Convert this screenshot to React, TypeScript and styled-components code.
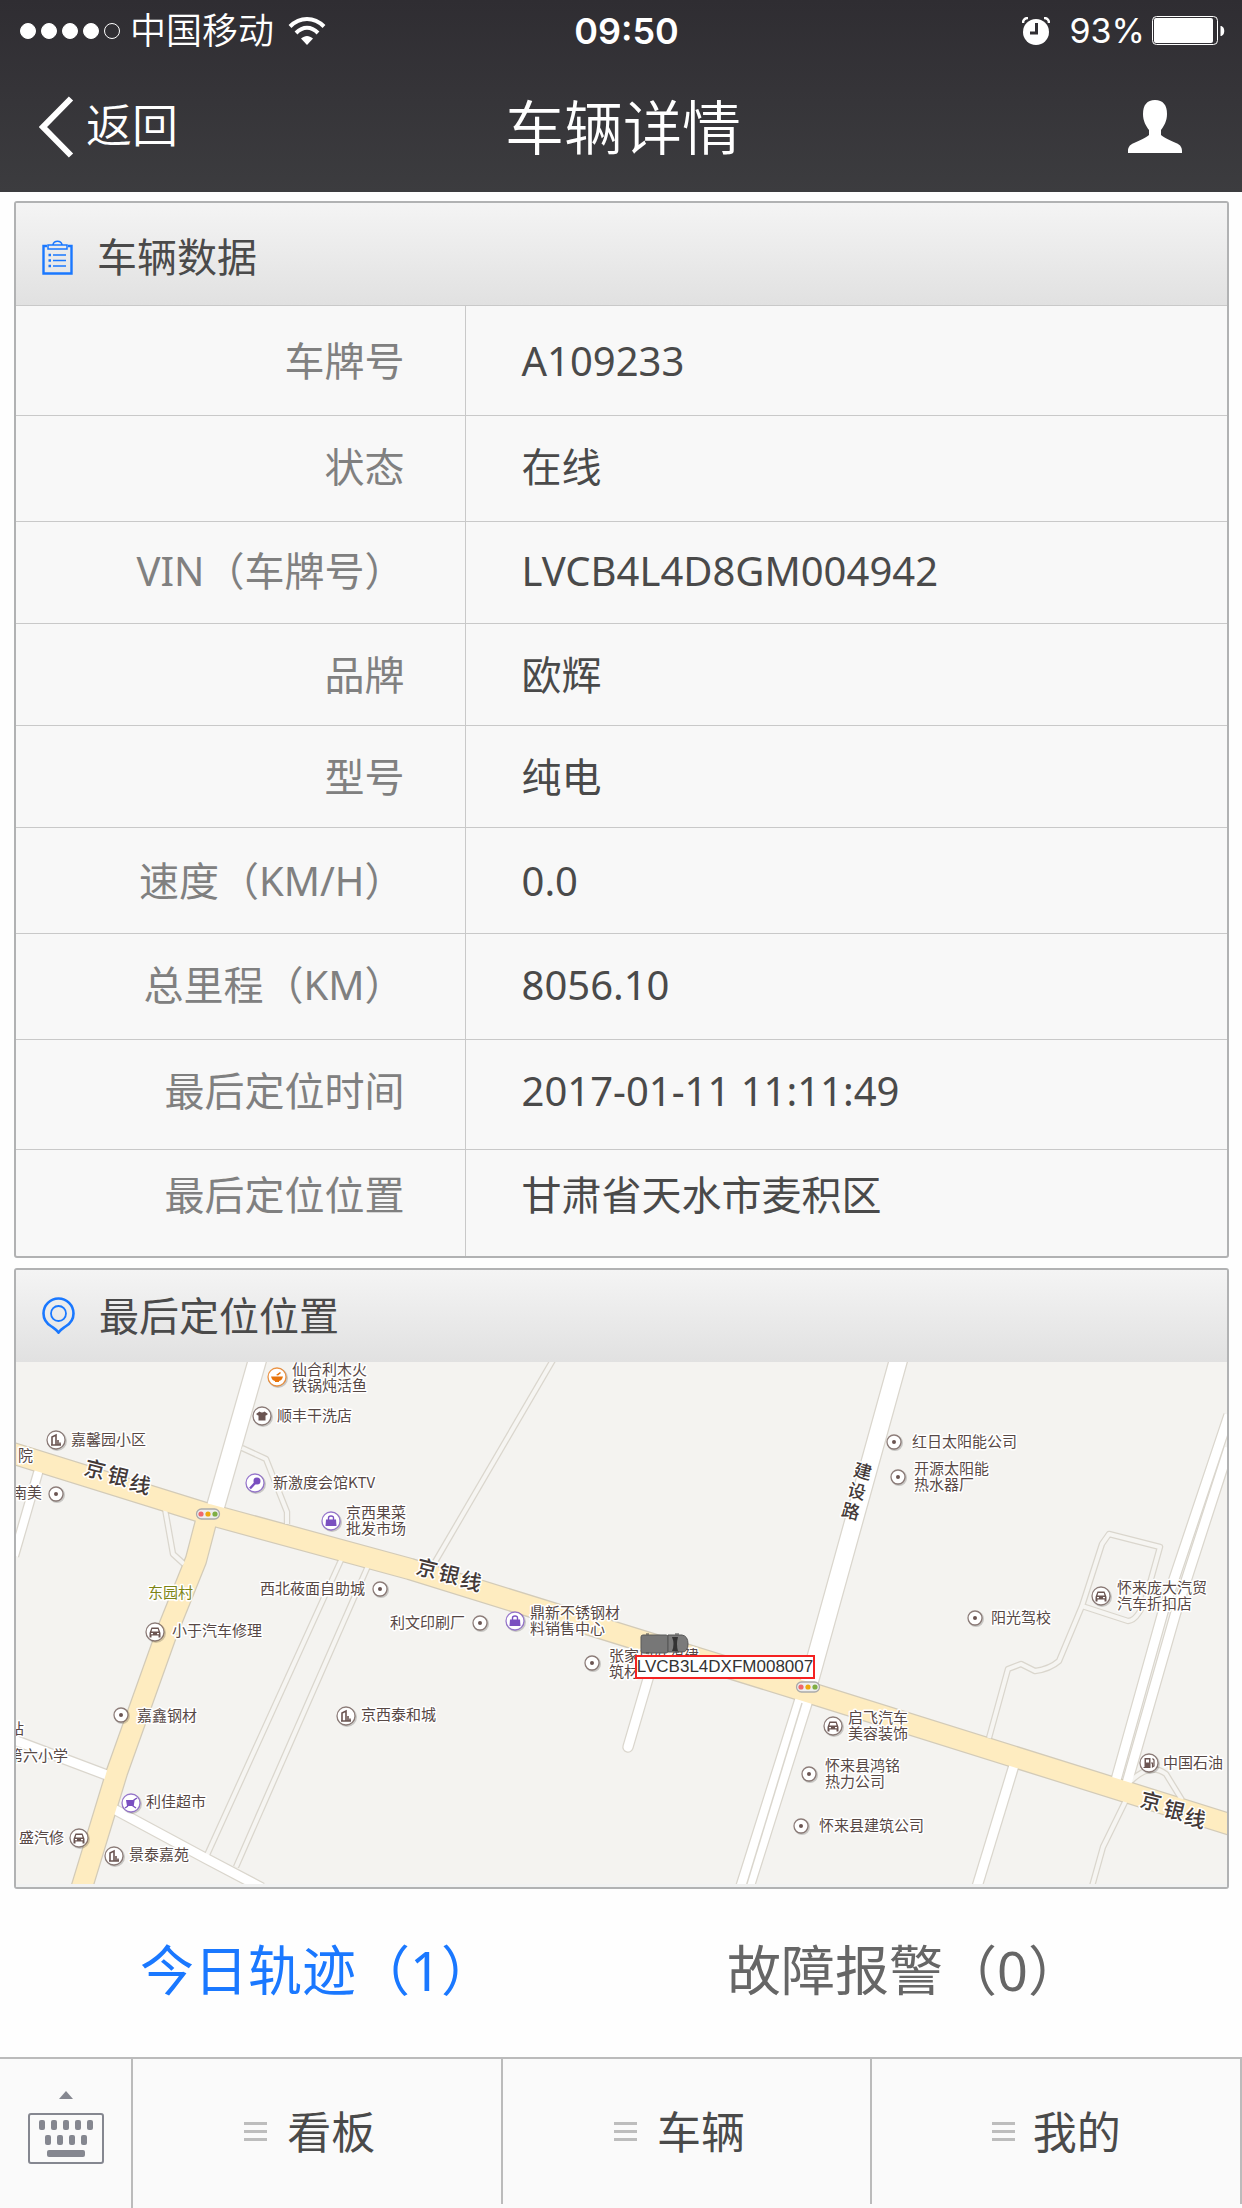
import React from "react";
import styled, { createGlobalStyle } from "styled-components";

const sans = `"Noto Sans", "Noto Sans CJK SC", sans-serif`;

const GlobalStyle = createGlobalStyle`
  * { box-sizing: border-box; }
  body { margin: 0; background: #fefefe; color: #4a4a4a; font-family: ${sans}; }
  button { border: 0; padding: 0; background: none; font: inherit; color: inherit; cursor: pointer; }
  h1, h2 { margin: 0; font-weight: 400; }
  svg { display: block; }
`;

const Page = styled.div`
  display: flex;
  flex-direction: column;
  min-height: 100vh;
`;

/* ---------- header ---------- */

const Header = styled.header`
  height: 192px;
  background: linear-gradient(#2f2d32, #3c3c3f);
  color: #fff;
`;

const StatusBar = styled.div`
  display: grid;
  grid-template-columns: 1fr auto 1fr;
  align-items: center;
  height: 62px;
  padding: 0 17px 0 20px;
  font: 36px/44px Inter, "Noto Sans CJK SC", sans-serif;
`;

const StatusSide = styled.div<{ $end?: boolean }>`
  display: flex;
  align-items: center;
  justify-content: ${(p) => (p.$end ? "flex-end" : "flex-start")};
  font-size: ${(p) => (p.$end ? 34 : 36)}px;
`;

const Signal = styled.div`
  display: flex;
  gap: 5px;
  margin-right: 10px;
`;

const SignalDot = styled.i<{ $off?: boolean }>`
  width: 16px;
  height: 16px;
  border: 1px solid #fff;
  border-radius: 50%;
  background: ${(p) => (p.$off ? "transparent" : "#fff")};
`;

const Carrier = styled.span`
  margin-right: 14px;
  font-weight: 350;
`;

const Clock = styled.time`
  padding-left: 8px;
  font-weight: 600;
`;

const Percent = styled.span`
  margin: 0 7px 0 20px;
`;

const NavBar = styled.div`
  display: grid;
  grid-template-columns: 1fr auto 1fr;
  align-items: center;
  height: 130px;
  padding: 0 39px;
`;

const BackButton = styled.button`
  display: flex;
  align-items: center;
  gap: 12px;
  justify-self: start;
  font-size: 46px;
  font-weight: 350;
`;

const BackText = styled.span`
  padding-bottom: 6px;
  line-height: 60px;
`;

const PageTitle = styled.h1`
  padding-left: 4px;
  font-size: 59px;
  font-weight: 350;
  line-height: 80px;
`;

const ProfileButton = styled.button`
  justify-self: end;
  margin-right: 20px;
`;

/* ---------- cards ---------- */

const Cards = styled.main`
  display: flex;
  flex-direction: column;
  gap: 10px;
  padding: 9px 13px 0 14px;
`;

const Card = styled.section`
  overflow: hidden;
  border: 2px solid #b1b2b3;
  border-radius: 3px;
  background: #f8f8f8;
`;

const CardHeader = styled.header<{ $tall?: boolean }>`
  display: flex;
  align-items: center;
  gap: 24px;
  height: ${(p) => (p.$tall ? 102 : 92)}px;
  padding: ${(p) => (p.$tall ? 6 : 0)}px 26px 0;
  background: linear-gradient(#f4f4f4, #e1e1e1);
`;

const CardTitle = styled.h2`
  font-size: 40px;
  line-height: 60px;
`;

const DataTable = styled.table`
  width: 100%;
  border-collapse: collapse;
  font-size: 40px;
  line-height: 60px;
`;

const DataRow = styled.tr<{ $height: number; $below: number }>`
  height: ${(p) => p.$height}px;
  border-top: 1px solid #c9c9c9;

  & > * {
    padding-top: 0;
    padding-bottom: ${(p) => p.$below}px;
  }
`;

const Label = styled.th`
  width: 449px;
  padding-right: 60px;
  border-right: 1px solid #c9c9c9;
  color: #808080;
  font-weight: 400;
  text-align: right;
`;

const Value = styled.td`
  padding-left: 56px;
  color: #4a4a4a;
`;

/* ---------- map ---------- */

const MapFrame = styled.div`
  position: relative;
  overflow: hidden;
  border-bottom: 3px solid #f1f2f2;
  background: #f4f3f0;
`;

const MapSvg = styled.svg`
  width: 100%;
  height: auto;

  text {
    font-family: "Noto Sans CJK SC", sans-serif;
    paint-order: stroke;
    stroke: #fff;
    stroke-width: 3px;
    stroke-linejoin: round;
  }
`;

const PlateTag = styled.span`
  position: absolute;
  left: 51.1%;
  top: 56.3%;
  border: 2px solid #f52222;
  background: #fff;
  color: #333;
  font: 17px/20px "Liberation Sans", sans-serif;
`;

/* ---------- summary links and bottom bar ---------- */

const Summary = styled.nav`
  display: grid;
  grid-template-columns: 1fr 1fr;
  align-items: center;
  flex: 1;
  padding: 0 44px 6px 24px;
`;

const SummaryLink = styled.a<{ $active?: boolean }>`
  color: ${(p) => (p.$active ? "#1a78ff" : "#666")};
  font-size: 54px;
  line-height: 80px;
  text-align: center;
  text-decoration: none;
`;

const BottomBar = styled.footer`
  display: grid;
  grid-template-columns: 133px 1fr 1fr 1fr;
  height: 151px;
  border-top: 2px solid #bbb;
  background: #fafafa;
`;

const KeyboardButton = styled.button`
  display: flex;
  flex-direction: column;
  align-items: center;
  gap: 14px;
  padding-top: 32px;
  border-right: 2px solid #bbb;
`;

const MenuButton = styled.button`
  display: flex;
  align-items: center;
  justify-content: center;
  gap: 20px;
  margin-bottom: 4px;
  padding-right: 14px;
  border-right: 2px solid #bbb;
  font-size: 44px;
  line-height: 60px;

  &:last-child {
    gap: 18px;
    padding-right: 0;
  }
`;

const MenuLines = styled.span`
  width: 23px;
  height: 19px;
  border: solid #bdbdbd;
  border-width: 3px 0;
  background: linear-gradient(#bdbdbd, #bdbdbd) center / 100% 3px no-repeat;
`;

/* ---------- icons ---------- */

const Wifi = () => (
  <svg width="38" height="28" viewBox="0 0 38 28" aria-hidden="true">
    <g fill="none" stroke="#fff" strokeWidth="4">
      <path d="M2 9.500C12-.500 26-.500 36 9.500" />
      <path d="M8 16C15 9 23 9 30 16" />
    </g>
    <path d="M19 28l-6-6.500c4-3.500 8-3.500 12 0z" fill="#fff" />
  </svg>
);

const Alarm = () => (
  <svg width="28" height="28" viewBox="0 0 28 28" aria-hidden="true">
    <circle cx="14" cy="15" r="13" fill="#fff" />
    <path d="M1 6C1 3 3 1 6 1M27 6c0-3-2-5-5-5" fill="none" stroke="#fff" strokeWidth="2.500" />
    <path d="M14.500 6v10H8" fill="none" stroke="#302e33" strokeWidth="3" />
  </svg>
);

const Battery = () => (
  <svg width="73" height="30" viewBox="0 0 73 30" aria-hidden="true">
    <rect x=".5" y=".5" width="65" height="28" rx="4" fill="none" stroke="#fff" />
    <rect x="2" y="2" width="59" height="25" rx="2" fill="#fff" />
    <path d="M68.500 10c5 0 5 10 0 10z" fill="#fff" />
  </svg>
);

const Chevron = () => (
  <svg width="35" height="62" viewBox="0 0 35 62" aria-hidden="true">
    <path d="M32 2.500L4 31l28 28.500" fill="none" stroke="#fff" strokeWidth="6" />
  </svg>
);

const Person = () => (
  <svg width="56" height="54" viewBox="0 0 56 54" aria-hidden="true">
    <path
      d="M28 0c8 0 12 5 12 14 0 7-3 12-6 16v5c3 3 9 5 15 8 5 2 6 5 6 8v2H1v-2c0-3 1-6 6-8 6-3 12-5 15-8v-5c-3-4-6-9-6-16C16 5 20 0 28 0z"
      fill="#fff"
    />
  </svg>
);

const Clipboard = () => (
  <svg width="31" height="35" viewBox="0 0 31 35" fill="none" stroke="#1a78ff" aria-hidden="true">
    <path d="M5 6H1.500v27.500h28V6H26" strokeWidth="2.400" />
    <path d="M6 5h19v4H6zM11 4.500c1-4.500 8-4.500 9 0" strokeWidth="1.500" />
    <path d="M11 15h13M11 20.500h13M11 26h13" strokeWidth="1.500" />
    <path d="M6.500 15h2.500M6.500 20.500H9M6.500 26H9" strokeWidth="2.500" />
  </svg>
);

const Pin = () => (
  <svg width="33" height="37" viewBox="0 0 33 37" fill="none" stroke="#1a78ff" aria-hidden="true">
    <path
      d="M16.500 35.500C15 33 13 32 9.500 29.500 4.500 26.500 1.500 22 1.500 16.500a15 15 0 0 1 30 0c0 5.500-3 10-8 13C20 32 18 33 16.500 35.500z"
      strokeWidth="2.600"
    />
    <circle cx="16.500" cy="16.500" r="7.500" strokeWidth="1.800" />
  </svg>
);

const Keyboard = () => (
  <svg width="76" height="51" viewBox="0 0 76 51" fill="#858790" aria-hidden="true">
    <rect x="1" y="1" width="74" height="49" rx="2" fill="none" stroke="#858790" strokeWidth="2" />
    {[11, 23, 35, 47, 59].map((x) => (
      <rect key={x} x={x} y="7" width="6" height="10" rx="2" />
    ))}
    {[17, 29, 41, 53].map((x) => (
      <rect key={x} x={x} y="22" width="6" height="10" rx="2" />
    ))}
    <rect x="19" y="37" width="38" height="7" rx="2" />
  </svg>
);

const ArrowUp = () => (
  <svg width="14" height="8" viewBox="0 0 14 8" fill="#858790" aria-hidden="true">
    <path d="M7 0l7 8H0z" />
  </svg>
);

/* ---------- map drawing ---------- */

type RoadSpec = { d: string; w: number; fill?: string; round?: boolean };

const roads: RoadSpec[] = [
  { d: "M242 1448L266 1459L287 1512V1524", w: 4, fill: "#f6f5f2" },
  { d: "M165 1509L173 1554L184 1564", w: 4, fill: "#f6f5f2" },
  { d: "M553 1360L435 1562", w: 4, fill: "#f6f5f2" },
  { d: "M342 1558L207 1855", w: 4, fill: "#f6f5f2" },
  { d: "M368 1566L236 1867", w: 4, fill: "#f6f5f2" },
  {
    d: "M989 1738L1008 1669L1021 1664L1035 1671Q1050 1669 1059 1661L1082 1606L1102 1544L1109 1534L1160 1547L1148 1590Q1140 1620 1128 1621L1082 1606",
    w: 4,
    fill: "#f6f5f2",
  },
  { d: "M1127 1798L1103 1847L1091 1890", w: 4, fill: "#f6f5f2" },
  { d: "M1131 1781Q1150 1762 1166 1774L1182 1800", w: 4, fill: "#f6f5f2" },
  { d: "M40 1466L14 1556", w: 8 },
  { d: "M14 1740L112 1777", w: 9 },
  { d: "M112 1808L205 1858L262 1888", w: 9 },
  { d: "M650 1672L628 1747", w: 9, round: true },
  { d: "M258 1358L214 1512", w: 17 },
  { d: "M899 1358L807 1690L744 1890", w: 17 },
  { d: "M1116 1780L1163 1612L1229 1415", w: 9 },
  { d: "M1127 1783L1176 1612L1229 1448", w: 9 },
  { d: "M1015 1762L976 1890", w: 9 },
  { d: "M208 1514L196 1560L167 1632L117 1772L81 1890", w: 20, fill: "#feecc0" },
  { d: "M12 1453L208 1514L410 1569L820 1696L1232 1825", w: 20, fill: "#feecc0" },
];

type Kind = "dot" | "car" | "building" | "shirt" | "bowl" | "mic" | "bag" | "cart" | "fuel";

const glyphs: Record<Kind, React.ReactNode> = {
  dot: <circle r="2" />,
  car: (
    <path
      fillRule="evenodd"
      d="M-3.500-4.500h7L5-.500 5.500 1v4.500h-2V3.500h-7v2h-2V1L-5-.500zM-2.800-3L-3.500-.500h7L2.800-3zM-4 1v1.200h2V1zM2 1v1.200h2V1z"
    />
  ),
  building: <path d="M-5 5h10M-4 5v-8l4-2v10M2 5V0M4 5V2.500" fill="none" strokeWidth="1.600" />,
  shirt: <path d="M-2.500-4.500Q0-2.500 2.500-4.500L6-2 4-.500H3.500V4.500h-7V-.500H-4L-6-2z" />,
  bowl: <path d="M-6-.500H6Q5 3.500 2 4v1h-4V4Q-5 3.500-6-.500zM-1-2l4-3 1 1-3 2.500z" />,
  mic: (
    <g>
      <circle cx="2" cy="-2" r="3.500" />
      <path d="M-5 5.500L1-1" strokeWidth="2.500" />
    </g>
  ),
  bag: (
    <g>
      <path d="M-5-1.500H5L5.500 5h-11z" />
      <path d="M-2.500-1v-2q0-2 2.500-2t2.500 2v2" fill="none" strokeWidth="1.400" />
    </g>
  ),
  cart: (
    <g>
      <path d="M-5-3h8L2 3h-6z" />
      <path d="M6-5L3-3 2 3 5 5M-3 3l-3 2" fill="none" strokeWidth="1.400" />
    </g>
  ),
  fuel: (
    <g>
      <path fillRule="evenodd" d="M-4.500-5h6V5h-7V4h1zM-3-3.500V-.500h3v-3z" />
      <path d="M2 0h1.500v4L5 3V-3L3.500-4.500" fill="none" strokeWidth="1.200" />
    </g>
  ),
};

type Place = { kind?: Kind; at?: [number, number]; x: number; y: number; lines: string[]; color?: string };

const places: Place[] = [
  { kind: "bowl", at: [277, 1377], x: 292, y: 1370, lines: ["仙合利木火", "铁锅炖活鱼"] },
  { kind: "shirt", at: [262, 1416], x: 277, y: 1416, lines: ["顺丰干洗店"] },
  { kind: "building", at: [56, 1440], x: 71, y: 1440, lines: ["嘉馨园小区"] },
  { x: 18, y: 1456, lines: ["院"] },
  { kind: "dot", at: [56, 1494], x: 12, y: 1493, lines: ["南美"] },
  { kind: "mic", at: [255, 1483], x: 273, y: 1483, lines: ["新激度会馆KTV"] },
  { kind: "bag", at: [331, 1521], x: 346, y: 1513, lines: ["京西果菜", "批发市场"] },
  { kind: "bag", at: [515, 1621], x: 530, y: 1613, lines: ["鼎新不锈钢材", "料销售中心"] },
  { kind: "dot", at: [480, 1623], x: 390, y: 1623, lines: ["利文印刷厂"] },
  { kind: "dot", at: [592, 1663], x: 609, y: 1656, lines: ["张家口好福建", "筑材"] },
  { kind: "dot", at: [380, 1589], x: 260, y: 1589, lines: ["西北莜面自助城"] },
  { x: 148, y: 1593, lines: ["东园村"], color: "#7d8415" },
  { kind: "car", at: [155, 1632], x: 172, y: 1631, lines: ["小于汽车修理"] },
  { kind: "dot", at: [121, 1715], x: 137, y: 1716, lines: ["嘉鑫钢材"] },
  { x: 9, y: 1729, lines: ["站"] },
  { x: 8, y: 1756, lines: ["第六小学"] },
  { kind: "cart", at: [131, 1803], x: 146, y: 1802, lines: ["利佳超市"] },
  { kind: "car", at: [79, 1838], x: 19, y: 1838, lines: ["盛汽修"] },
  { kind: "building", at: [114, 1856], x: 129, y: 1855, lines: ["景泰嘉苑"] },
  { kind: "building", at: [346, 1716], x: 361, y: 1715, lines: ["京西泰和城"] },
  { kind: "dot", at: [894, 1442], x: 912, y: 1442, lines: ["红日太阳能公司"] },
  { kind: "dot", at: [898, 1477], x: 914, y: 1469, lines: ["开源太阳能", "热水器厂"] },
  { kind: "car", at: [1101, 1596], x: 1117, y: 1588, lines: ["怀来庞大汽贸", "汽车折扣店"] },
  { kind: "dot", at: [975, 1618], x: 991, y: 1618, lines: ["阳光驾校"] },
  { kind: "car", at: [833, 1726], x: 848, y: 1718, lines: ["启飞汽车", "美容装饰"] },
  { kind: "dot", at: [809, 1774], x: 825, y: 1766, lines: ["怀来县鸿铭", "热力公司"] },
  { kind: "dot", at: [801, 1826], x: 819, y: 1826, lines: ["怀来县建筑公司"] },
  { kind: "fuel", at: [1149, 1763], x: 1163, y: 1763, lines: ["中国石油"] },
];

const roadNames: { size: number; chars: [string, number, number][] }[] = [
  { size: 21, chars: [["京", 95, 1470], ["银", 118, 1477], ["线", 140, 1485]] },
  { size: 21, chars: [["京", 427, 1569], ["银", 449, 1575], ["线", 471, 1582]] },
  { size: 21, chars: [["京", 1151, 1802], ["银", 1174, 1811], ["线", 1195, 1819]] },
  { size: 18, chars: [["建", 863, 1471], ["设", 857, 1491], ["路", 851, 1511]] },
];

const markerColor = (kind: Kind) =>
  kind === "bowl" ? "#e8740c" : kind === "mic" || kind === "bag" || kind === "cart" ? "#7a4fc0" : "#6b5552";

const Marker = ({ kind, at }: { kind: Kind; at: [number, number] }) => {
  const color = markerColor(kind);
  const r = kind === "dot" ? 7 : 9;
  return (
    <g transform={`translate(${at[0]} ${at[1]})`}>
      <circle cx="1" cy="1" r={r + 1} fill="#000" opacity=".18" />
      <circle r={r} fill="#fff" stroke={color} strokeOpacity=".75" strokeWidth="1.300" />
      <g fill={color} stroke={color} strokeWidth="0">
        {glyphs[kind]}
      </g>
    </g>
  );
};

const TrafficLight = ({ x, y }: { x: number; y: number }) => (
  <g transform={`translate(${x} ${y})`}>
    <rect x="-11.500" y="-5" width="23" height="10" rx="5" fill="#eee" stroke="#aaa" strokeWidth="1.300" />
    <circle cx="-7" r="2.600" fill="#f0686c" />
    <circle r="2.600" fill="#eda90e" />
    <circle cx="7" r="2.600" fill="#7fae45" />
  </g>
);

const Truck = () => (
  <g transform="translate(641 1634)">
    <rect x="0" y="1" width="27" height="18" rx="2" fill="#777" stroke="#5a5a5a" />
    <path d="M27 1h14q6 1 6 9t-6 8H27z" fill="#7b7b7b" stroke="#555" />
    <path d="M31 3h6q-2 7 0 14h-6q3-7 0-14z" fill="#333" />
    <path d="M5 0h3M34 0h4M5 19h3M34 18h4" stroke="#444" />
  </g>
);

const LocationMap = () => (
  <MapFrame>
    <MapSvg viewBox="16 1362 1211 522" role="img" aria-label="最后定位位置">
      <g fill="none" strokeLinejoin="round">
        {roads.map((r, i) => (
          <path key={i} d={r.d} stroke={r.fill === "#feecc0" ? "#d3cbb8" : "#dad6cd"} strokeWidth={r.w + 2.5} strokeLinecap={r.round ? "round" : "butt"} />
        ))}
        {roads.map((r, i) => (
          <path key={i} d={r.d} stroke={r.fill ?? "#fff"} strokeWidth={r.w} strokeLinecap={r.round ? "round" : "butt"} />
        ))}
        <path d="M802 1703L745 1890" stroke="#dad6cd" strokeWidth="1.500" />
      </g>
      <TrafficLight x={208} y={1514} />
      <TrafficLight x={808} y={1687} />
      {places.map((p) => (
        <g key={p.lines[0]}>
          {p.kind && p.at && <Marker kind={p.kind} at={p.at} />}
          {p.lines.map((line, i) => (
            <text key={line} x={p.x} y={p.y + 5 + i * 16} fontSize="15" fill={p.color ?? "#574845"}>
              {line}
            </text>
          ))}
        </g>
      ))}
      {roadNames.map((name, n) => (
        <g key={n} fontSize={name.size} fontWeight="500" fill="#443a38" textAnchor="middle">
          {name.chars.map(([c, x, y]) => (
            <text key={c} transform={`translate(${x} ${y}) rotate(14)`} y="7">
              {c}
            </text>
          ))}
        </g>
      ))}
      <Truck />
    </MapSvg>
    <PlateTag>LVCB3L4DXFM008007</PlateTag>
  </MapFrame>
);

/* ---------- page ---------- */

const rows = [
  { label: "车牌号", value: "A109233", height: 110, below: 0 },
  { label: "状态", value: "在线", height: 106, below: 4 },
  { label: "VIN（车牌号）", value: "LVCB4L4D8GM004942", height: 102, below: 4 },
  { label: "品牌", value: "欧辉", height: 102, below: 0 },
  { label: "型号", value: "纯电", height: 102, below: 0 },
  { label: "速度（KM/H）", value: "0.0", height: 106, below: 0 },
  { label: "总里程（KM）", value: "8056.10", height: 106, below: 4 },
  { label: "最后定位时间", value: "2017-01-11 11:11:49", height: 110, below: 8 },
  { label: "最后定位位置", value: "甘肃省天水市麦积区", height: 106, below: 16 },
];

export default function App() {
  return (
    <Page>
      <GlobalStyle />
      <Header>
        <StatusBar>
          <StatusSide>
            <Signal>
              <SignalDot />
              <SignalDot />
              <SignalDot />
              <SignalDot />
              <SignalDot $off />
            </Signal>
            <Carrier>中国移动</Carrier>
            <Wifi />
          </StatusSide>
          <Clock>09:50</Clock>
          <StatusSide $end>
            <Alarm />
            <Percent>93%</Percent>
            <Battery />
          </StatusSide>
        </StatusBar>
        <NavBar>
          <BackButton type="button">
            <Chevron />
            <BackText>返回</BackText>
          </BackButton>
          <PageTitle>车辆详情</PageTitle>
          <ProfileButton type="button" aria-label="我的">
            <Person />
          </ProfileButton>
        </NavBar>
      </Header>

      <Cards>
        <Card>
          <CardHeader $tall>
            <Clipboard />
            <CardTitle>车辆数据</CardTitle>
          </CardHeader>
          <DataTable>
            <tbody>
              {rows.map((row) => (
                <DataRow key={row.label} $height={row.height} $below={row.below}>
                  <Label scope="row">{row.label}</Label>
                  <Value>{row.value}</Value>
                </DataRow>
              ))}
            </tbody>
          </DataTable>
        </Card>
        <Card>
          <CardHeader>
            <Pin />
            <CardTitle>最后定位位置</CardTitle>
          </CardHeader>
          <LocationMap />
        </Card>
      </Cards>

      <Summary>
        <SummaryLink href="#track" $active>
          今日轨迹（1）
        </SummaryLink>
        <SummaryLink href="#alarm">故障报警（0）</SummaryLink>
      </Summary>

      <BottomBar>
        <KeyboardButton type="button" aria-label="键盘">
          <ArrowUp />
          <Keyboard />
        </KeyboardButton>
        {["看板", "车辆", "我的"].map((name) => (
          <MenuButton type="button" key={name}>
            <MenuLines />
            {name}
          </MenuButton>
        ))}
      </BottomBar>
    </Page>
  );
}
